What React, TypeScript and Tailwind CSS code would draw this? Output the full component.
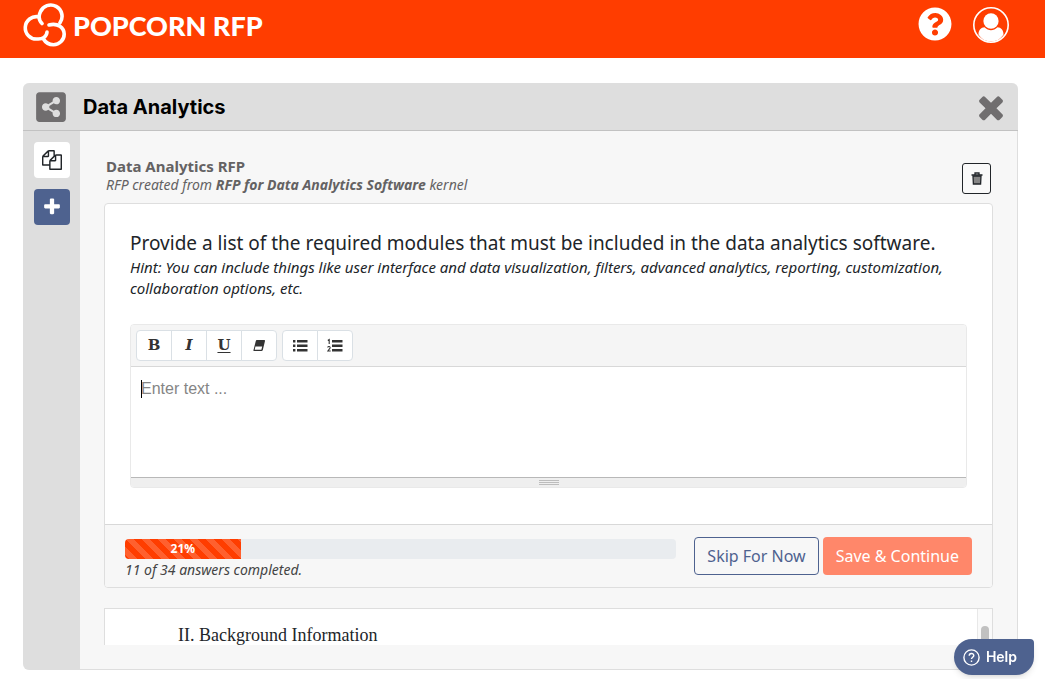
import { FaQuestionCircle, FaShareAltSquare } from "react-icons/fa";

const glyphs = {
  times:
    "M1490 1322q0 40-28 68l-136 136q-28 28-68 28t-68-28l-294-294-294 294q-28 28-68 28t-68-28l-136-136q-28-28-28-68t28-68l294-294-294-294q-28-28-28-68t28-68l136-136q28-28 68-28t68 28l294 294 294-294q28-28 68-28t68 28l136 136q28 28 28 68t-28 68l-294 294 294 294q28 28 28 68z",
  plus: "M1600 736v192q0 40-28 68t-68 28h-416v416q0 40-28 68t-68 28h-192q-40 0-68-28t-28-68v-416h-416q-40 0-68-28t-28-68v-192q0-40 28-68t68-28h416v-416q0-40 28-68t68-28h192q40 0 68 28t28 68v416h416q40 0 68 28t28 68z",
  files:
    "M1696 384q40 0 68 28t28 68v1216q0 40-28 68t-68 28h-960q-40 0-68-28t-28-68v-288h-544q-40 0-68-28t-28-68v-672q0-40 20-88t48-76l408-408q28-28 76-48t88-20h416q40 0 68 28t28 68v328q68-40 128-40h416zm-544 213l-299 299h299v-299zm-640-384l-299 299h299v-299zm196 647l316-316v-416h-384v416q0 40-28 68t-68 28h-416v640h512v-256q0-40 20-88t48-76zm956 804v-1152h-384v416q0 40-28 68t-68 28h-416v640h896z",
};

function Glyph({ name, className }: { name: keyof typeof glyphs; className: string }) {
  return (
    <svg viewBox="0 0 1792 1792" fill="currentColor" className={className} aria-hidden="true">
      <path d={glyphs[name]} />
    </svg>
  );
}

function PopcornMark() {
  return (
    <svg viewBox="0 0 44 45" fill="none" stroke="currentColor" strokeWidth="3.600" strokeLinecap="round" className="h-[45px] w-11" aria-hidden="true">
      <path d="M19 20.500C16 17.500 15.500 13 17.300 9A11.300 11.300 0 1 1 37 19.800" />
      <path d="M15.500 13.800A11.200 11.200 0 1 0 14 36C19.500 36.500 23.800 33.500 24 29" />
      <path d="M26 22C35 19.500 41 25 41.200 31C41.200 37 36.500 41.700 30.500 41.700C26 41.700 22.500 39.500 20.500 36" />
    </svg>
  );
}

function Header() {
  return (
    <header className="flex h-[58px] items-start justify-between bg-[#ff3d00] pl-[23px] pr-9 pt-[3px] text-white">
      <a href="#" className="flex items-center gap-[6px]">
        <PopcornMark />
        <span className="font-['Lato',sans-serif] text-[27px] font-black leading-[45px]">POPCORN RFP</span>
      </a>
      <div className="flex items-start gap-[21px] pt-1">
        <button type="button" aria-label="Questions">
          <FaQuestionCircle className="size-[34px]" />
        </button>
        <button type="button" aria-label="Account">
          <svg viewBox="0 0 36 36" className="size-9" fill="currentColor">
            <circle cx="18" cy="18" r="17.200" fill="none" stroke="currentColor" strokeWidth="1.600" />
            <path d="M5.500 27.500C5.500 23 8 20.500 11.500 20.300C15.500 24.300 20.500 24.300 24.500 20.300C28 20.500 30.500 23 30.500 27.500C27 32.500 23 34.500 18 34.500C13 34.500 9 32.500 5.500 27.500Z" />
            <ellipse cx="18" cy="14" rx="7.600" ry="7.800" />
          </svg>
        </button>
      </div>
    </header>
  );
}

function Sidebar() {
  return (
    <nav className="flex w-[57px] shrink-0 flex-col items-center gap-[11px] bg-[#dedede] pt-[11px]">
      <button type="button" aria-label="Documents" className="flex size-9 items-center justify-center rounded bg-white text-[#212529]">
        <Glyph name="files" className="size-5" />
      </button>
      <button type="button" aria-label="Add" className="flex size-9 items-center justify-center rounded bg-[#4e628f] text-white">
        <Glyph name="plus" className="size-5" />
      </button>
    </nav>
  );
}

const toolButton = "flex h-[31px] w-9 items-center justify-center border border-[#dae0e5] bg-white text-[#333] -ml-px first:ml-0 first:rounded-l last:rounded-r";

function Toolbar() {
  return (
    <div className="flex h-[42px] items-center gap-[5px] border-b border-[#d8d8d8] bg-[#f5f5f5] px-[5px] font-['DejaVu_Serif',serif] text-[15px] font-bold">
      <div className="flex">
        <button type="button" className={toolButton}>B</button>
        <button type="button" className={toolButton}>
          <span className="italic">I</span>
        </button>
        <button type="button" className={toolButton}>
          <span className="underline decoration-1 underline-offset-2">U</span>
        </button>
        <button type="button" aria-label="Clear formatting" className={toolButton}>
          <svg viewBox="0 0 14 15" className="h-[15px] w-[14px]">
            <path d="M4.800 2H12.200Q13.300 2 13 3L10.800 12Q10.500 13 9.500 13H2.200Q1.200 13 1.500 12L3.800 3Q4 2 4.800 2Z" fill="currentColor" />
            <path d="M3.400 8.500H10.200L9.400 11.800H2.700Z" fill="white" />
          </svg>
        </button>
      </div>
      <div className="flex">
        <button type="button" aria-label="Bulleted list" className={toolButton}>
          <svg viewBox="0 0 16 15" className="h-[15px] w-4" fill="currentColor">
            <path d="M1 2h2.400v2.400h-2.400zM1 6.500h2.400v2.400h-2.400zM1 11h2.400v2.400h-2.400zM5 2h10.500v2.400h-10.500zM5 6.500h10.500v2.400h-10.500zM5 11h10.500v2.400h-10.500z" />
          </svg>
        </button>
        <button type="button" aria-label="Numbered list" className={toolButton}>
          <svg viewBox="0 0 16 15" className="h-[15px] w-4" fill="currentColor">
            <path d="M5 2h10.500v2.400h-10.500zM5 6.500h10.500v2.400h-10.500zM5 11h10.500v2.400h-10.500z" />
            <path d="M0.800 2.500L2.200 1.500V6M0.700 9.500C1 8 3.500 8.300 3.100 10L0.900 13H3.700" fill="none" stroke="currentColor" strokeWidth="1.100" />
          </svg>
        </button>
      </div>
    </div>
  );
}

function Editor() {
  return (
    <div className="mt-[25px] overflow-hidden rounded border border-[#e9e9e9]">
      <Toolbar />
      <div className="relative">
        <textarea
          aria-label="Answer"
          placeholder="Enter text ..."
          className="block h-[110px] w-full resize-none bg-white px-[10px] py-[10px] font-['Liberation_Sans',sans-serif] text-base text-[#212529] outline-none placeholder:text-[#858585]"
        />
        <span className="absolute left-[10px] top-[13px] h-[18px] w-px bg-black" />
      </div>
      <div className="flex h-[10px] flex-col items-center gap-px border-t border-[#b8b8b8] bg-[#efefef] pt-[2px]">
        <span className="h-px w-5 bg-[#bdbdbd]" />
        <span className="h-px w-5 bg-[#bdbdbd]" />
        <span className="h-px w-5 bg-[#bdbdbd]" />
      </div>
    </div>
  );
}

function Progress({ value, done, total }: { value: number; done: number; total: number }) {
  return (
    <div className="flex-1">
      <div
        role="progressbar"
        aria-label="Answers completed"
        aria-valuenow={value}
        aria-valuemin={0}
        aria-valuemax={100}
        className="h-5 overflow-hidden rounded bg-[#e9ecef]"
      >
        <div
          className="h-full bg-[#ff3d00] bg-[linear-gradient(45deg,rgba(255,255,255,.18)_25%,transparent_25%,transparent_50%,rgba(255,255,255,.18)_50%,rgba(255,255,255,.18)_75%,transparent_75%,transparent)] bg-[size:16px_16px] text-center text-xs font-bold leading-5 text-white"
          style={{ width: `${value}%` }}
        >
          {value}%
        </div>
      </div>
      <p className="text-[14px] italic leading-[22px] text-[#444]">
        {done} of {total} answers completed.
      </p>
    </div>
  );
}

function QuestionCard() {
  return (
    <section className="overflow-hidden rounded border border-[#dedede] bg-white">
      <div className="px-[25px] pb-9 pt-[25px]">
        <h3 className="text-[19px] leading-7 text-[#212529]">
          Provide a list of the required modules that must be included in the data analytics software.
        </h3>
        <p className="text-[15px] italic leading-[21px] text-[#212529]">
          Hint: You can include things like user interface and data visualization, filters, advanced analytics, reporting, customization, collaboration options, etc.
        </p>
        <Editor />
      </div>
      <div className="flex items-start gap-[18px] border-t border-[#d8d8d8] bg-[#f7f7f7] px-5 pb-[6px] pt-3">
        <div className="flex flex-1 pt-[2px]">
          <Progress value={21} done={11} total={34} />
        </div>
        <div className="flex gap-1">
          <button type="button" className="h-[38px] rounded border border-[#4e628f] px-3 text-base text-[#4e628f]">
            Skip For Now
          </button>
          <button type="button" className="h-[38px] rounded bg-[#ff876a] px-[13px] text-base text-white">
            Save &amp; Continue
          </button>
        </div>
      </div>
    </section>
  );
}

function Preview() {
  return (
    <section className="mt-5 flex h-[37px] overflow-hidden border border-b-0 border-[#dedede] bg-white">
      <p className="flex-1 pl-[73px] pt-[14px] font-['Liberation_Serif',serif] text-lg leading-6 text-[#212529]">II. Background Information</p>
      <div className="flex w-[15px] justify-center border-l border-[#e8e8e8] bg-[#fafafa] pt-[17px]">
        <div className="h-10 w-2 rounded-full bg-[#c1c1c1]" />
      </div>
    </section>
  );
}

export default function App() {
  return (
    <div className="bg-white font-['Noto_Sans',sans-serif]">
      <Header />
      <main className="pb-[9px] pl-[23px] pr-[27px] pt-[25px]">
        <div className="overflow-hidden rounded-md bg-[#f7f7f7]">
          <div className="flex h-12 items-center border-b border-[#c2c2c2] bg-[#dedede] pl-[11px] pr-[9px]">
            <FaShareAltSquare className="size-[34px] text-[#706e6f]" />
            <h1 className="flex-1 pl-[15px] font-['Inter',sans-serif] text-xl font-bold text-black">Data Analytics</h1>
            <button type="button" aria-label="Close" className="text-[#706e6f]">
              <Glyph name="times" className="size-9" />
            </button>
          </div>
          <div className="flex">
            <Sidebar />
            <div className="min-w-0 flex-1 border-b border-r border-[#dedede] px-6 pb-6">
              <div className="flex h-[72px] items-start justify-between px-[2px] pt-[25px] text-[#646263]">
                <div>
                  <h2 className="text-[15px] font-bold leading-5">Data Analytics RFP</h2>
                  <p className="text-[14px] italic leading-[18px]">
                    RFP created from <b>RFP for Data Analytics Software</b> kernel
                  </p>
                </div>
                <button type="button" aria-label="Delete" className="mt-[7px] flex h-[31px] w-[29px] items-center justify-center rounded-[3px] border border-[#212529] bg-[#f9f9f9] text-[#212529]">
                  <svg viewBox="0 0 12 13" className="h-[13px] w-3">
                    <path d="M4 2.500V1H8V2.500M0.500 3H11.500" fill="none" stroke="currentColor" strokeWidth="1.300" />
                    <path d="M2 4H10L9.600 12H2.400Z" fill="#858585" stroke="currentColor" strokeWidth="1.300" />
                  </svg>
                </button>
              </div>
              <QuestionCard />
              <Preview />
            </div>
          </div>
        </div>
      </main>
      <button
        type="button"
        className="fixed bottom-1 right-[11px] flex h-9 items-center gap-[6px] rounded-bl-[18px] rounded-br-[18px] rounded-tl-[18px] rounded-tr bg-[#4e628f] pl-[9px] pr-[17px] font-['Inter',sans-serif] text-sm font-semibold text-white shadow-md"
      >
        <svg viewBox="0 0 17 17" className="size-[17px]" fill="none" stroke="currentColor" strokeWidth="1.400">
          <circle cx="8.500" cy="8.500" r="7.600" />
          <path d="M6.200 6.800C6.200 3.700 10.800 3.800 10.800 6.500C10.800 8.200 8.500 8.300 8.500 10M8.500 11.500V13" />
        </svg>
        Help
      </button>
    </div>
  );
}
